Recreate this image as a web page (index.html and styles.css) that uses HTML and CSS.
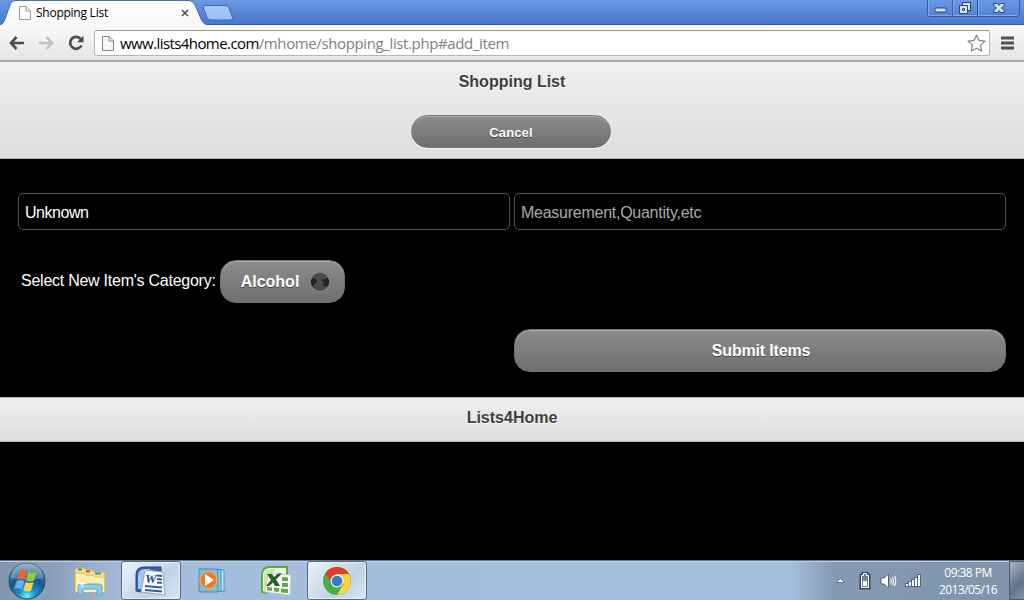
FILE: index.html
```html
<!DOCTYPE html>
<html lang="en">
<head>
<meta charset="utf-8">
<title>Shopping List</title>
<link rel="stylesheet" href="styles.css">
</head>
<body>
<div class="screen">
  <header class="titlebar">
    <div class="tab">
      <svg class="tab-shape" width="240" height="25" viewBox="0 0 240 25">
        <defs>
          <linearGradient id="tabfill" x1="0" y1="0" x2="0" y2="1"><stop offset="0" stop-color="#fff"/><stop offset="1" stop-color="#f8f8f8"/></linearGradient>
          <linearGradient id="newtab" x1="0" y1="0" x2="0" y2="1"><stop offset="0" stop-color="#a9c9f8"/><stop offset="1" stop-color="#9bbff3"/></linearGradient>
        </defs>
        <path d="M0 25C3 24 4 22 5 19L10 5Q11.500 .5 15 .5H189Q193 .5 195 5L201 19Q203 24 207 25" fill="url(#tabfill)" stroke="#416fb9"/>
        <path d="M205.500 5.500H225Q228 5.500 229 8L232.500 17.500Q233.500 20 230.500 20H211Q208 20 207 17.500L203.500 8Q202.500 5.500 205.500 5.500Z" fill="url(#newtab)" stroke="#3d6bb5"/>
      </svg>
      <svg class="tab-page" width="12" height="14" viewBox="0 0 12 14"><path d="M.5.5H7L11.500 5V13.500H.5ZM7 .5V5H11.500" fill="#fafafa" stroke="#9b9b9b"/></svg>
      <span class="tab-title">Shopping List</span>
      <svg class="tab-close" width="8" height="8" viewBox="0 0 8 8"><path d="M1 1L7 7M7 1L1 7" stroke="#555" stroke-width="1.700"/></svg>
    </div>
    <div class="window-buttons">
      <span class="wb wb-min"><svg width="13" height="7" viewBox="0 0 13 7"><rect x="1" y="1" width="11" height="4" rx="1" fill="#d3e2f8" stroke="#26457f"/></svg></span>
      <span class="wb wb-restore"><svg width="14" height="14" viewBox="0 0 14 14"><path d="M4.500 1.500H12.500V9.500H4.500Z" fill="#d3e2f8" stroke="#26457f"/><path d="M1.500 4.500H9.500V12.500H1.500Z" fill="#d3e2f8" stroke="#26457f"/><path d="M4.500 7.500H6.500V9.500H4.500Z" fill="#d3e2f8" stroke="#26457f"/></svg></span>
      <span class="wb wb-close"><svg width="12" height="12" viewBox="0 0 12 12"><path d="M.5 1.500H4.500L6 3.500L7.500 1.500H11.500V3L8.500 6L11.500 9V10.500H7.500L6 8.500L4.500 10.500H.5V9L3.500 6L.5 3Z" fill="#d3e2f8" stroke="#26457f"/></svg></span>
    </div>
  </header>
  <nav class="toolbar">
    <svg class="arrow-back" width="16" height="14" viewBox="0 0 16 14"><path d="M7.500 1L2 7L7.500 13M2 7H15" fill="none" stroke="#4d4d4d" stroke-width="2.700"/></svg>
    <svg class="arrow-next" width="16" height="14" viewBox="0 0 16 14"><path d="M8.500 1L14 7L8.500 13M14 7H1" fill="none" stroke="#c1c1c1" stroke-width="2.500"/></svg>
    <svg class="reload" width="16" height="16" viewBox="0 0 16 16"><path d="M12.800 4A6 6 0 1 0 13.500 10.500" fill="none" stroke="#4d4d4d" stroke-width="2.700"/><path d="M15.500 .8V7.200H9Z" fill="#4d4d4d"/></svg>
    <div class="omnibox">
      <svg class="url-page" width="12" height="15" viewBox="0 0 12 15"><path d="M.5.5H7L11.500 5V14.500H.5ZM7 .5V5H11.500" fill="#f7f7f7" stroke="#858585"/></svg>
      <span class="url"><span class="host">www.lists4home.com</span><span class="path">/mhome/shopping_list.php#add_item</span></span>
      <svg class="star" width="19" height="18" viewBox="0 0 19 18"><path d="M9.500 1L12 6.400L18 7.100L13.500 11.100L14.700 17L9.500 14.200L4.300 17L5.500 11.100L1 7.100L7 6.400Z" fill="#fff" stroke="#858585" stroke-linejoin="round" stroke-width="1.200"/></svg>
    </div>
    <svg class="menu" width="14" height="14" viewBox="0 0 14 14"><path d="M0 2H13M0 7H13M0 12H13" stroke="#515151" stroke-width="3"/></svg>
  </nav>
  <main class="page">
    <section class="page-head">
      <h1>Shopping List</h1>
      <a class="btn btn-cancel"><span>Cancel</span></a>
    </section>
    <section class="content">
      <div class="fields">
        <div class="field"><span class="unknown">Unknown</span></div>
        <div class="field hint"><span class="measure">Measurement,Quantity,etc</span></div>
      </div>
      <div class="category">
        <span class="label">Select New Item's Category:</span>
        <div class="btn btn-select"><span>Alcohol</span><svg width="20" height="20" viewBox="0 0 20 20"><circle cx="10" cy="10.900" r="9" fill="#aaa"/><circle cx="10" cy="10" r="9.200" fill="#4b4b4b"/><path d="M1.500 7L4.500 6L6.500 8V11L4 12.500L3.500 14.500L2 14Q0 10 1.500 7ZM18.500 7L16.500 5.500L15 7.500L12 7V9L14 10.500L13 13L15 14.500L18 14Q20 10 18.500 7Z" fill="#242424"/></svg></div>
      </div>
      <div class="submit-row"><div class="btn btn-submit"><span>Submit Items</span></div></div>
    </section>
    <footer class="page-foot"><h2>Lists4Home</h2></footer>
  </main>
  <footer class="taskbar">
    <svg class="start" width="38" height="38" viewBox="0 0 38 38">
      <defs><radialGradient id="orb" cx=".5" cy=".92" r=".9"><stop offset="0" stop-color="#6ff2ff"/><stop offset=".25" stop-color="#1d94c7"/><stop offset=".6" stop-color="#15558b"/><stop offset="1" stop-color="#7fa5be"/></radialGradient></defs>
      <circle cx="19" cy="19" r="18" fill="url(#orb)" stroke="#28465f"/>
      <path d="M3 16A16 16 0 0 1 35 16Q19 20 3 16Z" fill="#fff" opacity=".2"/>
      <path d="M12 8.500Q15.500 6.500 19 9L16.800 17.500Q13 15.500 9 17.500Z" fill="#ee6330"/>
      <path d="M20.300 9.800Q24 12 28.500 10L26 18.700Q22 20.500 18 18.300Z" fill="#98c83d"/>
      <path d="M8.600 19Q12.500 17 16.400 19.200L14 27.500Q10 25.500 6.300 27Z" fill="#62acef"/>
      <path d="M17.600 20Q21.500 22 25.500 20.300L23 28.500Q19 30.500 15.300 28.300Z" fill="#ffd04c"/>
    </svg>
    <span class="task explorer"><svg width="34" height="32" viewBox="0 0 34 32">
      <path d="M2 27V5Q2 3 4 3H11L13 5H19L21 7H30Q32 7 32 9V27Z" fill="#f5df8f" stroke="#cdb062"/><path d="M3 9H11L13 11H31V27H3Z" fill="#ffedab"/><path d="M3 8H11L13 10H20L22 12H31" fill="none" stroke="#d6ba70"/>
      <path d="M5 4.500H9" stroke="#25a431" stroke-width="2"/><path d="M13 6.500H17" stroke="#d74530" stroke-width="2"/><path d="M22 8.500H28" stroke="#3993d4" stroke-width="2"/>
      <path d="M5 30V22Q5 19 8 19H26Q29 19 29 22V30H24V25Q24 24 22 24H12Q10 24 10 25V30Z" fill="#8acceb" stroke="#5ca6ce"/><path d="M9 14V23M4.500 18.500H13.500M6 15.500L12 21.500M12 15.500L6 21.500" stroke="#fff" stroke-width=".8"/></svg></span>
    <span class="task active word"><svg width="32" height="32" viewBox="0 0 32 32">
      <path d="M2 26V10Q2 2 10 2H27V7L7 27Z" fill="#3560ae" stroke="#244985"/><path d="M4 24V11Q4 4 11 4H17Q9 9 8 24Z" fill="#a9c8f1"/>
      <path d="M11 5L29 7L31 30L7 27Z" fill="#f6f9ff" stroke="#8ca4cc"/><text x="11" y="18" class="word-w">W</text><path d="M23 10.500L28 11M23 14L28 14.500M23 17.500L28 18M11 21L28 22.500M11 25L28 26.500" stroke="#345aa0" stroke-width="2"/></svg></span>
    <span class="task media"><svg width="32" height="28" viewBox="0 0 32 28">
      <path d="M4 23L30 23L26 25L4 25Z" fill="#6e879e" opacity=".5"/><path d="M17 3H26V24H17Z" fill="#b9e5f6" stroke="#4d9bc2"/><path d="M12 2.500H23V24.500H12Z" fill="#8dcbe6" stroke="#3c91b8"/><path d="M1 2H20V25H1Z" fill="#76bddd" stroke="#488eae"/><circle cx="10.500" cy="13" r="8.500" fill="#ed7827" stroke="#ffb26c"/><path d="M7 7L16 13L7 19Z" fill="#fff"/></svg></span>
    <span class="task excel"><svg width="32" height="32" viewBox="0 0 32 32">
      <path d="M2 27V10Q2 2 10 2H27V9L7 28Z" fill="#edf8e5" stroke="#5bac37" stroke-width="2"/><path d="M4 25V11Q4 4 11 4H16Q9 10 8 25Z" fill="#c9e5b8"/>
      <path d="M8 8L31 10L30 30L5 27Z" fill="#fafcf7" stroke="#c0d0b9"/><path d="M22 12L28 12.500V16H22ZM22 18H28V22H22ZM21 23.500L28 24V28L21 27.500ZM14 22.500L19 23V27L14 26.500ZM7 22L12 22.500V26L7 25.500Z" fill="#68a64e"/><path d="M7 9H12L14 12L18 8.500H22L16 14.500L20 21H15L13 17.500L9 21H6L11 15Z" fill="#295e29"/></svg></span>
    <span class="task active chrome"><svg width="30" height="30" viewBox="0 0 30 30">
      <circle cx="15" cy="15" r="14" fill="#48ad46"/><path d="M15 8H27A14 14 0 0 1 15 29L21.500 18Z" fill="#ffd23c"/><path d="M3.300 7.400A14 14 0 0 1 27.200 8H15A7 7 0 0 0 8.500 15.500Z" fill="#e13c2c"/><circle cx="15" cy="15" r="6.500" fill="#f5f6f5"/><circle cx="15" cy="15" r="5.300" fill="#3479c5"/></svg></span>
    <div class="tray">
      <svg class="tray-up" width="9" height="6" viewBox="0 0 9 6"><path d="M.5 4.500L4.500.5L8.500 4.500Z" fill="#fff" stroke="#62758d"/></svg>
      <svg class="battery" width="12" height="18" viewBox="0 0 12 18"><path d="M3.500 1H8.500V3H10.500V16.500H1.500V3H3.500Z" fill="#3e4c5d" stroke="#34445a" stroke-width="2"/><path d="M4.500 1.500H7.500V3.500H9.500V15.500H2.500V3.500H4.500Z" fill="#6f8095" stroke="#fff"/><path d="M4 9H8V14H4Z" fill="#fff"/></svg>
      <svg class="volume" width="17" height="16" viewBox="0 0 17 16"><path d="M1 5H4L8.500 1V15L4 11H1Z" fill="#fff" stroke="#5a6673"/><path d="M10.500 5.500Q12 8 10.500 10.500M12.500 4Q14.500 8 12.500 12M14.500 3Q17 8 14.500 13" fill="none" stroke="#f3f6f9" stroke-width="1.200"/></svg>
      <svg class="signal" width="17" height="13" viewBox="0 0 17 13"><path d="M0 9H3V7H6V5H9V3H12V0H16V13H0Z" fill="#526277"/><path d="M2 12V10M5 12V8M8 12V6M11 12V4M14 12V1" stroke="#fff" stroke-width="2"/></svg>
      <div class="clock"><span>09:38 PM</span><span>2013/05/16</span></div>
      <span class="show-desktop"></span>
    </div>
  </footer>
</div>
</body>
</html>
```
FILE: styles.css
```css
* { box-sizing: border-box; }
body { margin: 0; background: #000; font-family: "Liberation Sans", Arial, sans-serif; }
svg { display: block; flex: none; }
.screen { width: 1024px; height: 600px; overflow: hidden; display: flex; flex-direction: column; background: #000; }
.titlebar { height: 25px; flex: none; display: flex; justify-content: space-between; align-items: flex-start; background: linear-gradient(#6b98e3, #4a78cd); border-bottom: 1px solid #315a9f; }
.tab { position: relative; width: 240px; height: 25px; padding: 1px 0 0 19px; display: flex; align-items: center; }
.tab-shape { position: absolute; left: 0; top: 0; }
.tab-page, .tab-title, .tab-close { position: relative; }
.tab-title { width: 145px; margin-left: 5px; font: 12px/18px "Open Sans", sans-serif; letter-spacing: -.25px; color: #000; }
.window-buttons { display: flex; width: 93px; height: 17px; margin-right: 4px; border: 1px solid #305ba6; border-top: 0; border-radius: 0 0 4px 4px; background: linear-gradient(#6b98e3, #5481d2); box-shadow: inset 0 -1px #83a8e7; }
.wb { display: flex; align-items: center; justify-content: center; border-right: 1px solid #305ba6; box-shadow: inset 1px 0 #83a8e7; }
.wb-min { width: 25px; padding-top: 4px; }
.wb-restore { width: 25px; }
.wb-close { flex: 1; border-right: 0; }
.toolbar { flex: none; height: 37px; padding: 1px 9px 0 9px; display: flex; align-items: center; background: linear-gradient(#f9f9f9, #e5e5e5); border-bottom: 2px solid #a9a9a9; }
.arrow-next { margin-left: 13px; }
.reload { margin-left: 14px; }
.omnibox { height: 26px; width: 896px; flex: none; margin-left: 10px; padding: 0 3px 0 7px; display: flex; align-items: center; background: #fff; border: 1px solid #b4b4b4; border-top-color: #999; border-radius: 3px; }
.url { margin-left: 6px; flex: 1; font: 15px/20px "Open Sans", sans-serif; letter-spacing: -.38px; white-space: nowrap; color: #808080; }
.host { color: #000; letter-spacing: -.58px; }
.menu { margin-left: 11px; }
.page { height: 498px; flex: none; }
.page-head { height: 97px; padding-top: 10px; display: flex; flex-direction: column; align-items: center; background: linear-gradient(#f0f0f0, #ddd); border-bottom: 1px solid #b3b3b3; }
h1, h2 { margin: 0; font-size: 16px; line-height: 20px; font-weight: bold; color: #3e3e3e; text-shadow: 0 1px #fff; text-align: center; }
.btn { display: flex; align-items: center; justify-content: center; border: 1px solid #767676; color: #fff; font-weight: bold; text-shadow: 0 1px #444; background: linear-gradient(#8d8d8d, #6e6e6e); box-shadow: inset 0 1px rgba(255,255,255,.3); }
.btn-cancel { width: 200px; height: 33px; margin: 23px 2px 0 0; padding-top: 1px; border-radius: 17px; font-size: 13px; letter-spacing: .15px; box-shadow: inset 0 1px rgba(255,255,255,.3), 0 1px #f5f5f5; }
.content { height: 238px; padding: 34px 18px 0; }
.fields { display: grid; grid-template-columns: 1fr 1fr; gap: 4px; }
.field { height: 37px; padding: 2px 6px 0; display: flex; align-items: center; border: 1px solid #555; border-radius: 5px; color: #fff; font-size: 16px; }
.hint { color: #aaa; }
.unknown { letter-spacing: -.45px; }
.measure { letter-spacing: -.26px; }
.category { display: flex; align-items: center; margin-top: 30px; padding-left: 3px; color: #fff; font-size: 16px; }
.label { width: 199px; flex: none; padding-bottom: 2px; letter-spacing: -.25px; white-space: nowrap; }
.btn-select { width: 125px; height: 43px; border-radius: 16px; gap: 11px; padding-left: 6px; }
.submit-row { display: flex; justify-content: flex-end; margin-top: 26px; }
.btn-submit { width: 492px; height: 43px; padding-left: 2px; border-radius: 16px; letter-spacing: -.17px; }
.page-foot { height: 45px; padding-top: 10px; background: linear-gradient(#f0f0f0, #ddd); border: solid #b3b3b3; border-width: 1px 0; }
.taskbar { flex: none; height: 40px; display: flex; align-items: center; padding-left: 8px; background: linear-gradient(90deg, #8295ad, #8b9fbb 50px, #a4bddc 130px, #a5bfde 790px, #8499b3 835px, #8194ac); border-top: 1px solid #617488; box-shadow: inset 0 1px #bed0e4; }
.task { display: flex; align-items: center; justify-content: center; width: 60px; height: 39px; }
.explorer { margin-left: 13px; width: 62px; }
.active { border: 1px solid #556981; border-radius: 3px; background: linear-gradient(135deg, #edf3fa, #c2d2e5 60%, #d8e5f4); box-shadow: inset 0 0 0 1px #e6f0fa; }
.media { width: 64px; padding-left: 2px; }
.excel { width: 62px; }
.word { padding-right: 2px; }
.word-w { font: italic bold 13px "Liberation Serif", serif; fill: #244b96; }
.tray { display: flex; align-items: center; margin-left: auto; height: 39px; }
.battery { margin-left: 14px; }
.volume { margin-left: 9px; }
.signal { margin-left: 8px; }
.clock { margin-left: 15px; width: 62px; display: flex; flex-direction: column; align-items: center; font: 12px/17px "Open Sans", sans-serif; letter-spacing: -.55px; color: #fff; white-space: nowrap; }
.show-desktop { margin-left: 10px; width: 15px; height: 39px; border: 1px solid #4d5c6f; border-right: 0; background: linear-gradient(135deg, #a5b2c1, #637389 60%, #8293a8); }
```
